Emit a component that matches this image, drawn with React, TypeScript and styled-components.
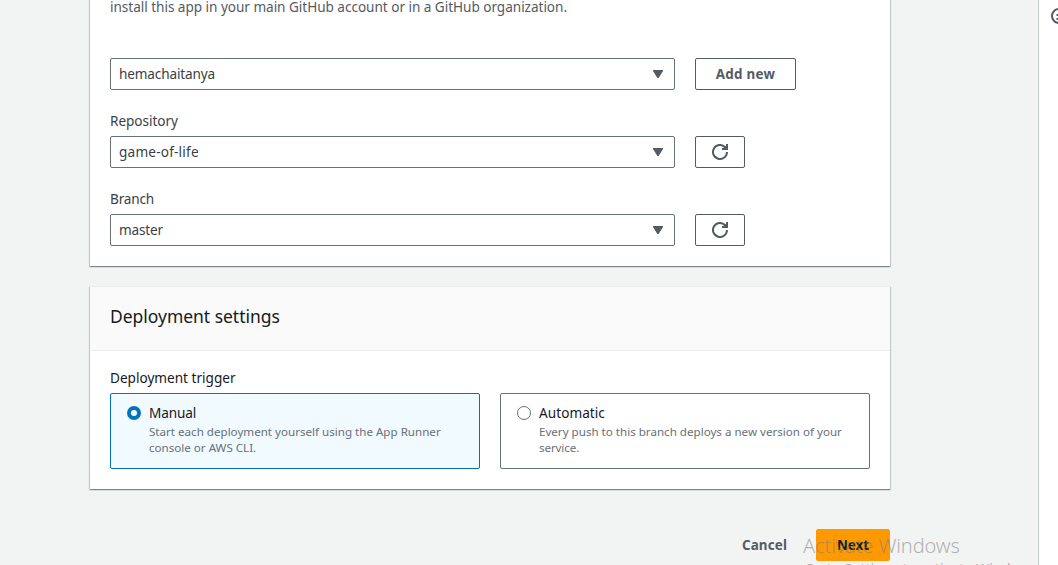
import React from "react";
import styled, { createGlobalStyle } from "styled-components";

const Global = createGlobalStyle`
  *, *::before, *::after { box-sizing: border-box; }
  html, body { margin: 0; height: 100%; overflow: hidden; }
  body {
    background: #f2f3f3;
    font-family: "Noto Sans", "Open Sans", sans-serif;
    font-size: 13.6px;
    line-height: 22px;
    color: #16191f;
  }
`;

const Page = styled.div`
  display: flex;
  justify-content: space-between;
  height: 565px;
  overflow: hidden;
`;

const Content = styled.main`
  width: 800px;
  margin: -10px 0 0 90px;
  flex: none;
`;

const HelpRail = styled.aside`
  width: 20px;
  flex: none;
  overflow: hidden;
  background: #fff;
  border-left: 1px solid #c3cccc;
  padding: 8px 0 0 12px;
  color: #545b64;

  svg { display: block; }
`;

const Card = styled.section`
  background: #fff;
  box-shadow: 0 1px 1px 0 rgba(0, 28, 36, 0.3), 1px 1px 1px 0 rgba(0, 28, 36, 0.15),
    -1px 1px 1px 0 rgba(0, 28, 36, 0.15);

  & + & {
    margin-top: 20px;
    border-top: 1px solid #eaeded;
  }
`;

const CardHeader = styled.header`
  height: 64px;
  padding: 18px 20px;
  background: #fafafa;
  border-bottom: 1px solid #eaeded;
`;

const CardTitle = styled.h2`
  margin: 0;
  font-size: 17.5px;
  line-height: 22px;
  font-weight: 400;
`;

const CardBody = styled.div<{ $top: number }>`
  padding: ${(p) => p.$top}px 20px 20px;
`;

const Text = styled.span<{ $track?: number }>`
  letter-spacing: ${(p) => p.$track ?? 0}px;
  white-space: nowrap;
`;

const Intro = styled.p`
  margin: 0 0 40px;
  height: 18px;
  line-height: 14px;
  color: #545b64;
`;

const Field = styled.div`
  & + & { margin-top: 20px; }
`;

const Label = styled.div<{ $soft?: boolean }>`
  height: 26px;
  line-height: 22px;
  color: ${(p) => (p.$soft ? "#3a3f45" : "#16191f")};
`;

const Controls = styled.div`
  display: flex;
  gap: 20px;
`;

const Select = styled.div`
  display: flex;
  align-items: center;
  justify-content: space-between;
  width: 565px;
  height: 32px;
  padding: 0 11px 0 8px;
  border: 1px solid #687078;
  border-radius: 2px;
  color: #3a3f45;
`;

const Button = styled.button<{ $kind?: "primary" | "link"; $width: number }>`
  display: flex;
  align-items: center;
  justify-content: center;
  width: ${(p) => p.$width}px;
  height: 32px;
  padding: 0;
  border-radius: 2px;
  font: 700 13.4px/22px "Noto Sans", "Open Sans", sans-serif;
  border: 1px solid
    ${(p) => (p.$kind === "primary" ? "#ff9900" : p.$kind === "link" ? "transparent" : "#545b64")};
  background: ${(p) => (p.$kind === "primary" ? "#ff9900" : "transparent")};
  color: ${(p) => (p.$kind === "primary" ? "#16191f" : "#545b64")};
`;

const Tiles = styled.div`
  display: grid;
  grid-template-columns: 370px 370px;
  gap: 20px;
`;

const Tile = styled.div<{ $selected?: boolean }>`
  display: flex;
  gap: 8px;
  height: 76px;
  padding: 8px 16px;
  border: 1px solid ${(p) => (p.$selected ? "#0073bb" : "#687078")};
  border-radius: 2px;
  background: ${(p) => (p.$selected ? "#f1faff" : "#fff")};
`;

const Radio = styled.span<{ $selected?: boolean }>`
  flex: none;
  width: 14px;
  height: 14px;
  margin-top: 4px;
  border-radius: 50%;
  background: #fff;
  border: ${(p) => (p.$selected ? "4px solid #0073bb" : "1px solid #687078")};
`;

const TileName = styled.div`
  line-height: 22px;
`;

const TileNote = styled.div`
  display: flex;
  flex-direction: column;
  font-size: 11.6px;
  line-height: 16px;
  color: #687078;
`;

const Footer = styled.footer`
  display: flex;
  justify-content: flex-end;
  gap: 8px;
  margin-top: 40px;
`;

const Watermark = styled.div`
  position: absolute;
  left: 803px;
  top: 532px;
  height: 33px;
  overflow: hidden;
  color: rgba(125, 125, 125, 0.58);
  white-space: nowrap;
  pointer-events: none;
`;

const WatermarkTitle = styled.div`
  font-size: 20px;
  font-weight: 300;
  line-height: 27px;
  letter-spacing: -0.1px;
`;

const WatermarkNote = styled.div`
  padding-left: 1px;
  font-size: 14.3px;
  line-height: 20px;
`;

const Caret = () => (
  <svg width="10" height="8" viewBox="0 0 10 8">
    <path d="M0 0h10v1L5.6 8H4.4L0 1z" fill="#545b64" />
  </svg>
);

const Refresh = () => (
  <svg width="16" height="16" viewBox="0 0 16 16" fill="none" stroke="#545b64" strokeWidth="2">
    <path d="M15 8a7 7 0 1 1-2.1-5L14 4.2" />
    <path d="M10 5h5V0" />
    <path d="M12 2l3 0v3h-3z" fill="#545b64" stroke="none" />
  </svg>
);

const Help = () => (
  <svg width="16" height="16" viewBox="0 0 16 16" fill="none" stroke="currentColor" strokeWidth="2">
    <circle cx="8" cy="8" r="7" />
    <path d="M7 7h1v4M5.5 11h4M5.5 7h2" />
  </svg>
);

export default function App() {
  return (
    <>
      <Global />
      <Page>
        <Content>
          <Card>
            <CardBody $top={10}>
              <Intro>
                <Text $track={-0.04}>
                  install this app in your main GitHub account or in a GitHub organization.
                </Text>
              </Intro>
              <Field>
                <Controls>
                  <Select>
                    <Text $track={-0.15}>hemachaitanya</Text>
                    <Caret />
                  </Select>
                  <Button $width={101}>
                    <Text $track={0.25}>Add new</Text>
                  </Button>
                </Controls>
              </Field>
              <Field>
                <Label $soft>
                  <Text $track={-0.04}>Repository</Text>
                </Label>
                <Controls>
                  <Select>
                    <Text $track={0.2}>game-of-life</Text>
                    <Caret />
                  </Select>
                  <Button $width={50} aria-label="Refresh repositories">
                    <Refresh />
                  </Button>
                </Controls>
              </Field>
              <Field>
                <Label $soft>
                  <Text $track={-0.2}>Branch</Text>
                </Label>
                <Controls>
                  <Select>
                    <Text $track={-0.18}>master</Text>
                    <Caret />
                  </Select>
                  <Button $width={50} aria-label="Refresh branches">
                    <Refresh />
                  </Button>
                </Controls>
              </Field>
            </CardBody>
          </Card>
          <Card>
            <CardHeader>
              <CardTitle>
                <Text $track={-0.03}>Deployment settings</Text>
              </CardTitle>
            </CardHeader>
            <CardBody $top={16}>
              <Label>
                <Text>Deployment trigger</Text>
              </Label>
              <Tiles>
                <Tile $selected>
                  <Radio $selected />
                  <div>
                    <TileName>
                      <Text $track={-0.15}>Manual</Text>
                    </TileName>
                    <TileNote>
                      <Text>Start each deployment yourself using the App Runner</Text>
                      <Text>console or AWS CLI.</Text>
                    </TileNote>
                  </div>
                </Tile>
                <Tile>
                  <Radio />
                  <div>
                    <TileName>
                      <Text $track={0.05}>Automatic</Text>
                    </TileName>
                    <TileNote>
                      <Text>Every push to this branch deploys a new version of your</Text>
                      <Text $track={-0.1}>service.</Text>
                    </TileNote>
                  </div>
                </Tile>
              </Tiles>
            </CardBody>
          </Card>
          <Footer>
            <Button $kind="link" $width={87}>
              <Text $track={0.15}>Cancel</Text>
            </Button>
            <Button $kind="primary" $width={74}>
              <Text>Next</Text>
            </Button>
          </Footer>
        </Content>
        <HelpRail>
          <Help />
        </HelpRail>
      </Page>
      <Watermark>
        <WatermarkTitle>Activate Windows</WatermarkTitle>
        <WatermarkNote>Go to Settings to activate Windows.</WatermarkNote>
      </Watermark>
    </>
  );
}
